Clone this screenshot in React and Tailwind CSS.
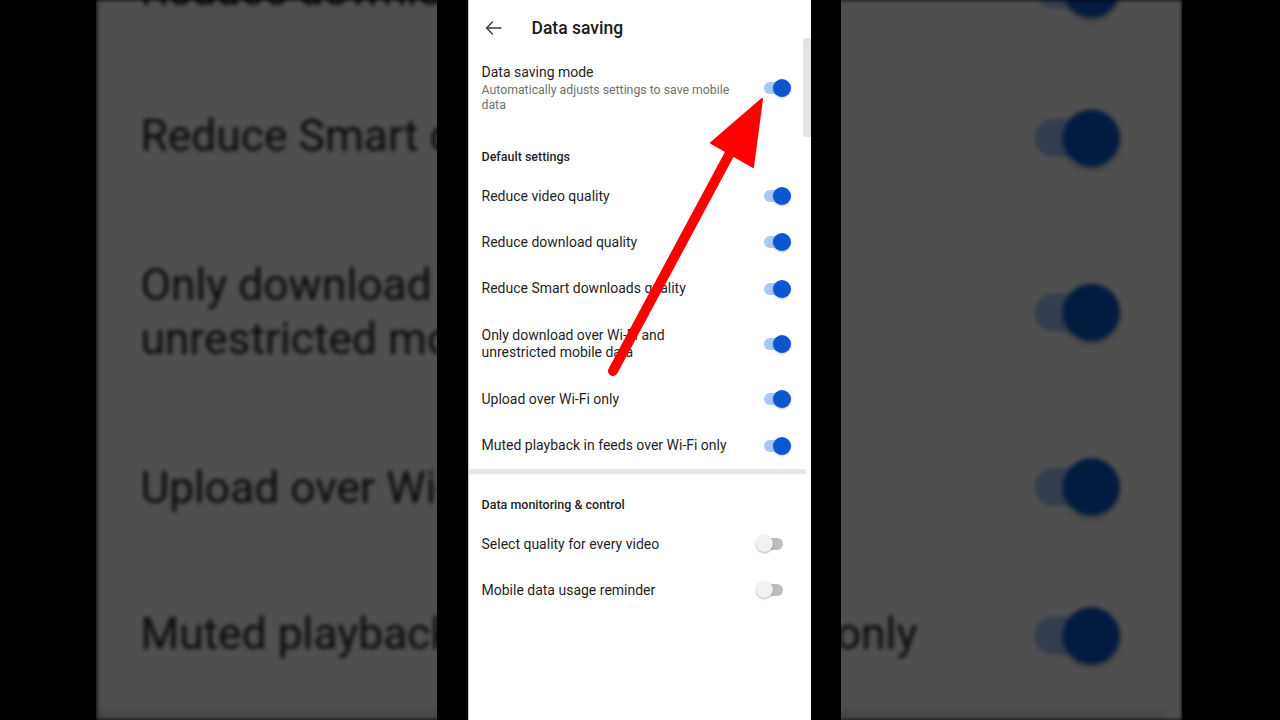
import React from "react";

const defaultRows = [
  { label: "Reduce video quality", h: "h-[46px]", on: true },
  { label: "Reduce download quality", h: "h-[46px]", on: true },
  { label: "Reduce Smart downloads quality", h: "h-[47px]", on: true },
  { label: "Only download over Wi-Fi and unrestricted mobile data", h: "h-[64px]", on: true },
  { label: "Upload over Wi-Fi only", h: "h-[46px]", on: true },
  { label: "Muted playback in feeds over Wi-Fi only", h: "h-[47px]", on: true },
];

const monitorRows = [
  { label: "Select quality for every video", h: "h-[46px]", on: false },
  { label: "Mobile data usage reminder", h: "h-[46px]", on: false },
];

const Toggle = ({ on }) => (
  <div className="relative w-[36px] h-[18px] shrink-0">
    {on ? (
      <>
        <div className="absolute left-[8px] top-[3px] w-[24px] h-[12px] rounded-full bg-[#a8c7fa]" />
        <div className="absolute left-[17px] top-0 w-[18px] h-[18px] rounded-full bg-[#0b57d0] shadow-[0_1px_2px_rgba(0,0,0,0.25)]" />
      </>
    ) : (
      <>
        <div className="absolute left-[5px] top-[3px] w-[22px] h-[12px] rounded-full bg-[#bdbdbd]" />
        <div className="absolute left-0 top-0 w-[17px] h-[17px] rounded-full bg-[#f1f1f1] shadow-[0_1px_2px_rgba(0,0,0,0.3)]" />
      </>
    )}
  </div>
);

const Row = ({ label, h, on }) => (
  <div className={`${h} flex items-center justify-between pl-[13px] pr-[19px]`}>
    <span className="text-[14px] leading-[17px] text-[#1f1f1f] max-w-[250px]">{label}</span>
    <Toggle on={on} />
  </div>
);

// the settings screen itself, used twice: sharp in the middle, blurred behind
const SettingsScreen = () => (
  <div className="relative w-[343px] h-[720px] bg-white border-l border-[#c4c4c4] font-['Roboto',sans-serif] overflow-hidden">
    {/* header */}
    <div className="h-[56px] flex items-center pl-[16px]">
      <svg width="17" height="14" viewBox="0 0 17 14" fill="none" stroke="#3c3c3c" strokeWidth="1.4" strokeLinecap="round" strokeLinejoin="round">
        <path d="M16 7H1.5M7.5 1L1.5 7l6 6" />
      </svg>
      <span className="ml-[30px] text-[17.5px] font-medium text-[#1a1a1a]">Data saving</span>
    </div>

    {/* scrollbar */}
    <div className="absolute right-0 top-[38px] w-[8px] h-[99px] rounded-l-[4px] bg-[#e3e3e3]" />

    <div className="h-[73px] flex justify-between pl-[13px] pr-[19px] pt-[8px]">
      <div>
        <div className="text-[14px] leading-[17px] text-[#1f1f1f]">Data saving mode</div>
        <div className="mt-[2px] text-[12.3px] leading-[15px] text-[#707070] max-w-[262px]">
          Automatically adjusts settings to save mobile data
        </div>
      </div>
      <div className="pt-[15px]">
        <Toggle on />
      </div>
    </div>

    <div className="h-[44px] pl-[13px] pt-[20px] text-[12.5px] leading-[16px] font-medium text-[#1f1f1f]">
      Default settings
    </div>
    {defaultRows.map((r, i) => (
      <Row key={i} {...r} />
    ))}

    <div className="h-[5px] mr-[5px] bg-[#e8e8e8]" />

    <div className="h-[47px] pl-[13px] pt-[23px] text-[12.5px] leading-[16px] font-medium text-[#1f1f1f]">
      Data monitoring &amp; control
    </div>
    {monitorRows.map((r, i) => (
      <Row key={i} {...r} />
    ))}
  </div>
);

const RedArrow = () => (
  <svg className="absolute left-0 top-0 pointer-events-none" width="343" height="720" viewBox="0 0 343 720">
    <line x1="145" y1="371" x2="262" y2="153" stroke="#fe0000" strokeWidth="10" strokeLinecap="round" />
    <polygon points="294,99 243,143 285,167" fill="#fe0000" stroke="#fe0000" strokeWidth="2" strokeLinejoin="round" />
  </svg>
);

export default function App() {
  return (
    <div className="w-[1280px] h-[720px] bg-black flex overflow-hidden">
      <div className="w-[96px] shrink-0" />

      <div className="relative w-[1086px] h-[720px] shrink-0 overflow-hidden">
        {/* blurred enlarged copy behind */}
        <div className="absolute inset-0 overflow-hidden blur-[2px] brightness-[0.31]">
          <div className="origin-top-left scale-[3.17] -translate-y-[778px]">
            <SettingsScreen />
          </div>
        </div>

        <div className="relative h-full flex justify-center">
          <div className="w-[404px] h-full bg-black flex justify-center">
            <div className="relative">
              <SettingsScreen />
              <RedArrow />
            </div>
          </div>
        </div>
      </div>
    </div>
  );
}
